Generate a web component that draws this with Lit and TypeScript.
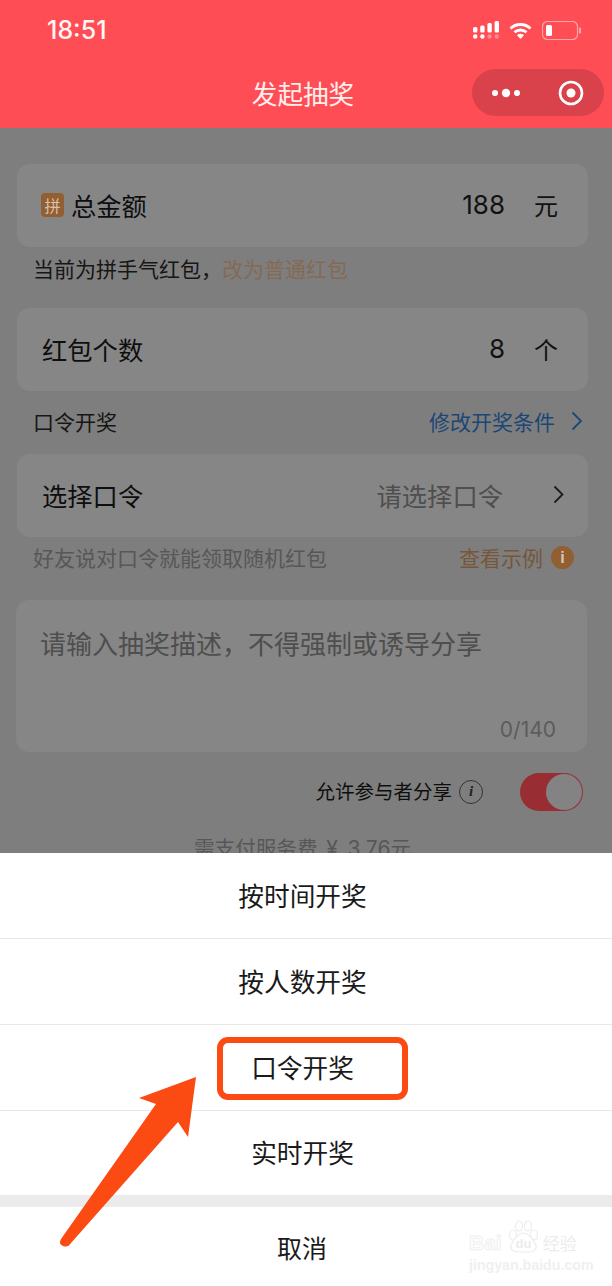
import { LitElement, html, css, svg } from 'lit';
import { customElement } from 'lit/decorators.js';

const SHEET_ITEMS = ['按时间开奖', '按人数开奖', '口令开奖', '实时开奖'];

@customElement('app-root')
export class AppRoot extends LitElement {
  static styles = css`
    :host {
      display: block;
      position: relative;
      width: 612px;
      height: 1286px;
      overflow: hidden;
      background: #7e7e7e;
      font-family: 'Noto Sans CJK SC', 'Liberation Sans', sans-serif;
      color: #111;
    }

    /* header */
    .header {
      height: 128px;
      background: #ff4d55;
      color: #fff;
      display: flex;
      flex-direction: column;
    }
    .status {
      height: 60px;
      padding: 0 31px 0 47px;
      display: flex;
      align-items: center;
      justify-content: space-between;
    }
    .time {
      font-family: 'Inter', 'Liberation Sans', sans-serif;
      font-size: 25px;
      font-weight: 500;
      color: #fff5f5;
    }
    .status-icons {
      display: flex;
      align-items: center;
      gap: 10px;
    }
    .status-icons svg {
      display: block;
    }
    .nav {
      position: relative;
      display: flex;
      justify-content: center;
      height: 47px;
      margin-top: 9px;
      padding-right: 6px;
      align-items: center;
      font-size: 25.6px;
      line-height: 1;
      color: #fff0f0;
    }
    .capsule {
      position: absolute;
      left: 472px;
      top: 0;
      width: 132px;
      height: 47px;
      border-radius: 24px;
      background: #d9424a;
      display: flex;
      align-items: center;
    }
    .capsule svg {
      display: block;
    }

    /* form */
    .form {
      padding: 36px 24px 0 17px;
    }
    .card {
      width: 571px;
      height: 83px;
      box-sizing: border-box;
      padding: 0 30px 2px 25px;
      background: #868686;
      border-radius: 13px;
      display: flex;
      align-items: center;
      font-size: 25.3px;
    }
    .card.picker {
      padding-right: 24px;
    }
    .card .label {
      flex: 1;
      display: flex;
      align-items: center;
      gap: 7px;
      color: #0e0e0e;
    }
    .badge {
      width: 23px;
      height: 24px;
      margin-left: -1px;
      border-radius: 4px;
      background: #925f33;
      color: #d9c2ab;
      font-size: 16px;
      line-height: 24px;
      text-align: center;
    }
    .num {
      font-family: 'Inter', 'Liberation Sans', sans-serif;
      font-size: 26px;
    }
    .unit {
      margin-left: 29px;
      font-size: 24px;
    }
    .placeholder {
      color: #4e4e4e;
      margin-right: 50px;
    }
    .chev {
      display: block;
    }
    .hint {
      height: 61px;
      padding: 0 6px 0 16px;
      width: 571px;
      box-sizing: border-box;
      display: flex;
      align-items: center;
      font-size: 21px;
      color: #161616;
    }
    .hint.first {
      padding-bottom: 19px;
    }
    .hint .grow {
      flex: 1;
    }
    .brown {
      color: #846a55;
    }
    .hint.tight {
      height: 63px;
      padding-right: 5px;
      padding-bottom: 3px;
    }
    .hint.mute {
      color: #575757;
      padding-right: 6px;
      padding-bottom: 23px;
    }
    .blue {
      color: #1b4676;
    }
    .brown-strong {
      color: #78563a;
    }
    .info {
      width: 23px;
      height: 23px;
      border-radius: 50%;
      margin-left: 8px;
      margin-right: 8px;
      background: #925f33;
      color: #d9c7b5;
      font: 700 16px/23px 'Liberation Sans', sans-serif;
      text-align: center;
    }
    .desc {
      position: relative;
      width: 571px;
      height: 152px;
      box-sizing: border-box;
      margin: 0 0 0 -1px;
      padding: 23px 24px;
      background: #868686;
      border-radius: 13px;
      font-size: 26px;
      line-height: 39px;
      color: #4e4e4e;
    }
    .count {
      position: absolute;
      right: 31px;
      bottom: 8px;
      font-family: 'Inter', 'Liberation Sans', sans-serif;
      font-size: 21px;
      line-height: 28px;
      color: #5c5c5c;
    }
    .share {
      height: 80px;
      width: 566px;
      display: flex;
      align-items: center;
      justify-content: flex-end;
      font-size: 19.5px;
      color: #0e0e0e;
    }
    .share-text {
      margin: -4px 1px 0 0;
    }
    .share-info {
      width: 24px;
      height: 24px;
      box-sizing: border-box;
      margin-left: 6px;
      border: 1.5px solid #333;
      border-radius: 50%;
      font: italic 700 15px/21px 'Liberation Serif', serif;
      text-align: center;
      color: #222;
    }
    .switch {
      width: 62px;
      height: 38px;
      margin-left: 37px;
      border-radius: 19px;
      background: #982e34;
      display: flex;
      justify-content: flex-end;
      align-items: center;
      padding-right: 1px;
    }
    .knob {
      width: 36px;
      height: 36px;
      border-radius: 50%;
      background: #838383;
    }
    .fee {
      text-align: center;
      font-size: 20.6px;
      line-height: 28px;
      margin-top: 1px;
      word-spacing: 4px;
      color: #575757;
    }
    .fee span {
      font-family: 'Inter', 'Liberation Sans', sans-serif;
      font-size: 21px;
    }

    /* action sheet */
    .sheet {
      position: absolute;
      left: 0;
      right: 0;
      top: 853px;
      bottom: 0;
      background: #fff;
      display: flex;
      flex-direction: column;
    }
    .item {
      height: 83px;
      padding: 0 7px 2px 0;
      display: flex;
      align-items: center;
      justify-content: center;
      font-size: 25.7px;
      color: #1a1a1a;
      border-bottom: 1px solid #e8e8e8;
      box-sizing: content-box;
    }
    .item:nth-child(4) {
      border-bottom: 0;
      height: 81px;
      padding-bottom: 3px;
    }
    .gap {
      height: 12px;
      background: #ebebeb;
    }
    .cancel {
      flex: 1;
      padding: 0 8px 0 0;
      display: flex;
      align-items: center;
      justify-content: center;
      font-size: 25px;
      color: #1a1a1a;
    }

    /* annotations drawn on top of the screenshot */
    .mark {
      position: absolute;
      left: 217px;
      top: 1037px;
      width: 191px;
      height: 63px;
      box-sizing: border-box;
      border: 6px solid #fb4a12;
      border-radius: 11px;
    }
    .arrow {
      position: absolute;
      left: 50px;
      top: 1070px;
    }
    .wm {
      position: absolute;
      left: 469px;
      top: 1220px;
      width: 125px;
      color: #fff;
    }
    .wm-top {
      display: flex;
      align-items: flex-end;
      height: 33px;
      white-space: nowrap;
    }
    .wm-bai {
      font: 700 21px/21px 'Liberation Sans', sans-serif;
      -webkit-text-stroke: 1px #f0f0f0;
    }
    .wm-paw {
      display: block;
      flex: none;
      margin: 0 3px 0 5px;
    }
    .wm-cn {
      font-size: 17px;
      line-height: 21px;
      color: #ececec;
    }
    .wm-url {
      font: 700 14.2px/16px 'Liberation Sans', sans-serif;
      color: #f0f0f0;
      margin-top: 4px;
      white-space: nowrap;
    }
  `;

  signalIcon() {
    const bars = [6, 4.5, 2, 0];
    return html`<svg width="26" height="18" viewBox="0 0 26 18">
      ${bars.map((top, i) => svg`<rect x=${i * 7.2} y=${top} width="4.4" height=${11.5 - top} rx="1.5" fill="#fff"/>`)}
      ${bars.map((_, i) => svg`<circle cx=${2.2 + i * 7.2} cy="15.5" r="2.2" fill=${i < 2 ? '#fff' : '#ff8a8f'}/>`)}
    </svg>`;
  }

  render() {
    return html`
      <div class="header">
        <div class="status">
          <span class="time">18:51</span>
          <div class="status-icons">
            ${this.signalIcon()}
            <svg width="23" height="17" viewBox="0 0 23 17" fill="none" stroke="#fff" stroke-width="2.8">
              <path d="M1.5 6.5 A14.5 14.5 0 0 1 21.5 6.5"/>
              <path d="M5.5 10.3 A9 9 0 0 1 17.5 10.3"/>
              <path d="M11.5 17 L8 13.3 A5 5 0 0 1 15 13.3 Z" fill="#fff" stroke="none"/>
            </svg>
            <svg width="39" height="19" viewBox="0 0 39 19">
              <rect x="0.5" y="0.5" width="35" height="18" rx="5" fill="none" stroke="#ffa5a8" stroke-width="1.2"/>
              <rect x="4" y="4" width="6" height="11" rx="1.5" fill="#fff"/>
              <path d="M37 6.5 a3 3 0 0 1 0 6 Z" fill="#ffa5a8"/>
            </svg>
          </div>
        </div>
        <div class="nav">
          发起抽奖
          <div class="capsule">
            <svg width="132" height="47" viewBox="0 0 132 47">
              <circle cx="23" cy="24" r="3" fill="#fff"/>
              <circle cx="34" cy="24" r="4.2" fill="#fff"/>
              <circle cx="45" cy="24" r="3" fill="#fff"/>
              <circle cx="99" cy="24" r="11" fill="none" stroke="#fff" stroke-width="2.6"/>
              <circle cx="99" cy="24" r="4.5" fill="#fff"/>
            </svg>
          </div>
        </div>
      </div>

      <div class="form">
        <div class="card">
          <div class="label"><span class="badge">拼</span>总金额</div>
          <span class="num">188</span><span class="unit">元</span>
        </div>
        <div class="hint first">当前为拼手气红包，<span class="brown">改为普通红包</span></div>
        <div class="card">
          <div class="label">红包个数</div>
          <span class="num">8</span><span class="unit">个</span>
        </div>
        <div class="hint tight">
          <span class="grow">口令开奖</span>
          <span class="blue">修改开奖条件</span>
          <svg class="chev" style="margin-left:16px" width="12" height="20" viewBox="0 0 12 20" fill="none" stroke="#1b4676" stroke-width="1.8">
            <path d="M1.5 1.5 L10 10 L1.5 18.5"/>
          </svg>
        </div>
        <div class="card picker">
          <div class="label">选择口令</div>
          <span class="placeholder">请选择口令</span>
          <svg class="chev" width="11" height="19" viewBox="0 0 11 19" fill="none" stroke="#1c1c1c" stroke-width="1.8">
            <path d="M1.5 1.5 L9.5 9.5 L1.5 17.5"/>
          </svg>
        </div>
        <div class="hint mute tight">
          <span class="grow">好友说对口令就能领取随机红包</span>
          <span class="brown-strong">查看示例</span>
          <span class="info">i</span>
        </div>
        <div class="desc">
          请输入抽奖描述，不得强制或诱导分享
          <span class="count">0/140</span>
        </div>
        <div class="share">
          <span class="share-text">允许参与者分享</span>
          <span class="share-info">i</span>
          <span class="switch"><span class="knob"></span></span>
        </div>
        <div class="fee">需支付服务费 <span>¥ 3.76</span>元</div>
      </div>

      <div class="sheet">
        ${SHEET_ITEMS.map((t) => html`<div class="item">${t}</div>`)}
        <div class="gap"></div>
        <div class="cancel">取消</div>
      </div>

      <div class="mark"></div>
      <svg class="arrow" width="150" height="190" viewBox="0 0 150 190">
        <path d="M146 7 L89 28 L106 34 L11 169 Q8 174 13 176 Q18 178 21 173 L128 52 L138 67 Z" fill="#fb4a12"/>
      </svg>
      <div class="wm">
        <div class="wm-top">
          <span class="wm-bai">Bai</span>
          <svg class="wm-paw" width="33" height="33" viewBox="0 0 33 33" fill="#fff" stroke="#ececec" stroke-width="1.2">
            <ellipse cx="6" cy="15" rx="3.5" ry="5"/>
            <ellipse cx="12" cy="6" rx="3.5" ry="5"/>
            <ellipse cx="21" cy="6" rx="3.5" ry="5"/>
            <ellipse cx="27" cy="15" rx="3.5" ry="5"/>
            <path d="M16.5 13 C11 13 6 21 4 25 C3 30 7 32 11 32 L22 32 C26 32 30 30 29 25 C27 21 22 13 16.5 13 Z"/>
            <text x="16.5" y="28" font-family="Liberation Sans, sans-serif" font-size="13" font-weight="700" text-anchor="middle" fill="#ececec" stroke="none">du</text>
          </svg>
          <span class="wm-cn">经验</span>
        </div>
        <div class="wm-url">jingyan.baidu.com</div>
      </div>
    `;
  }
}
